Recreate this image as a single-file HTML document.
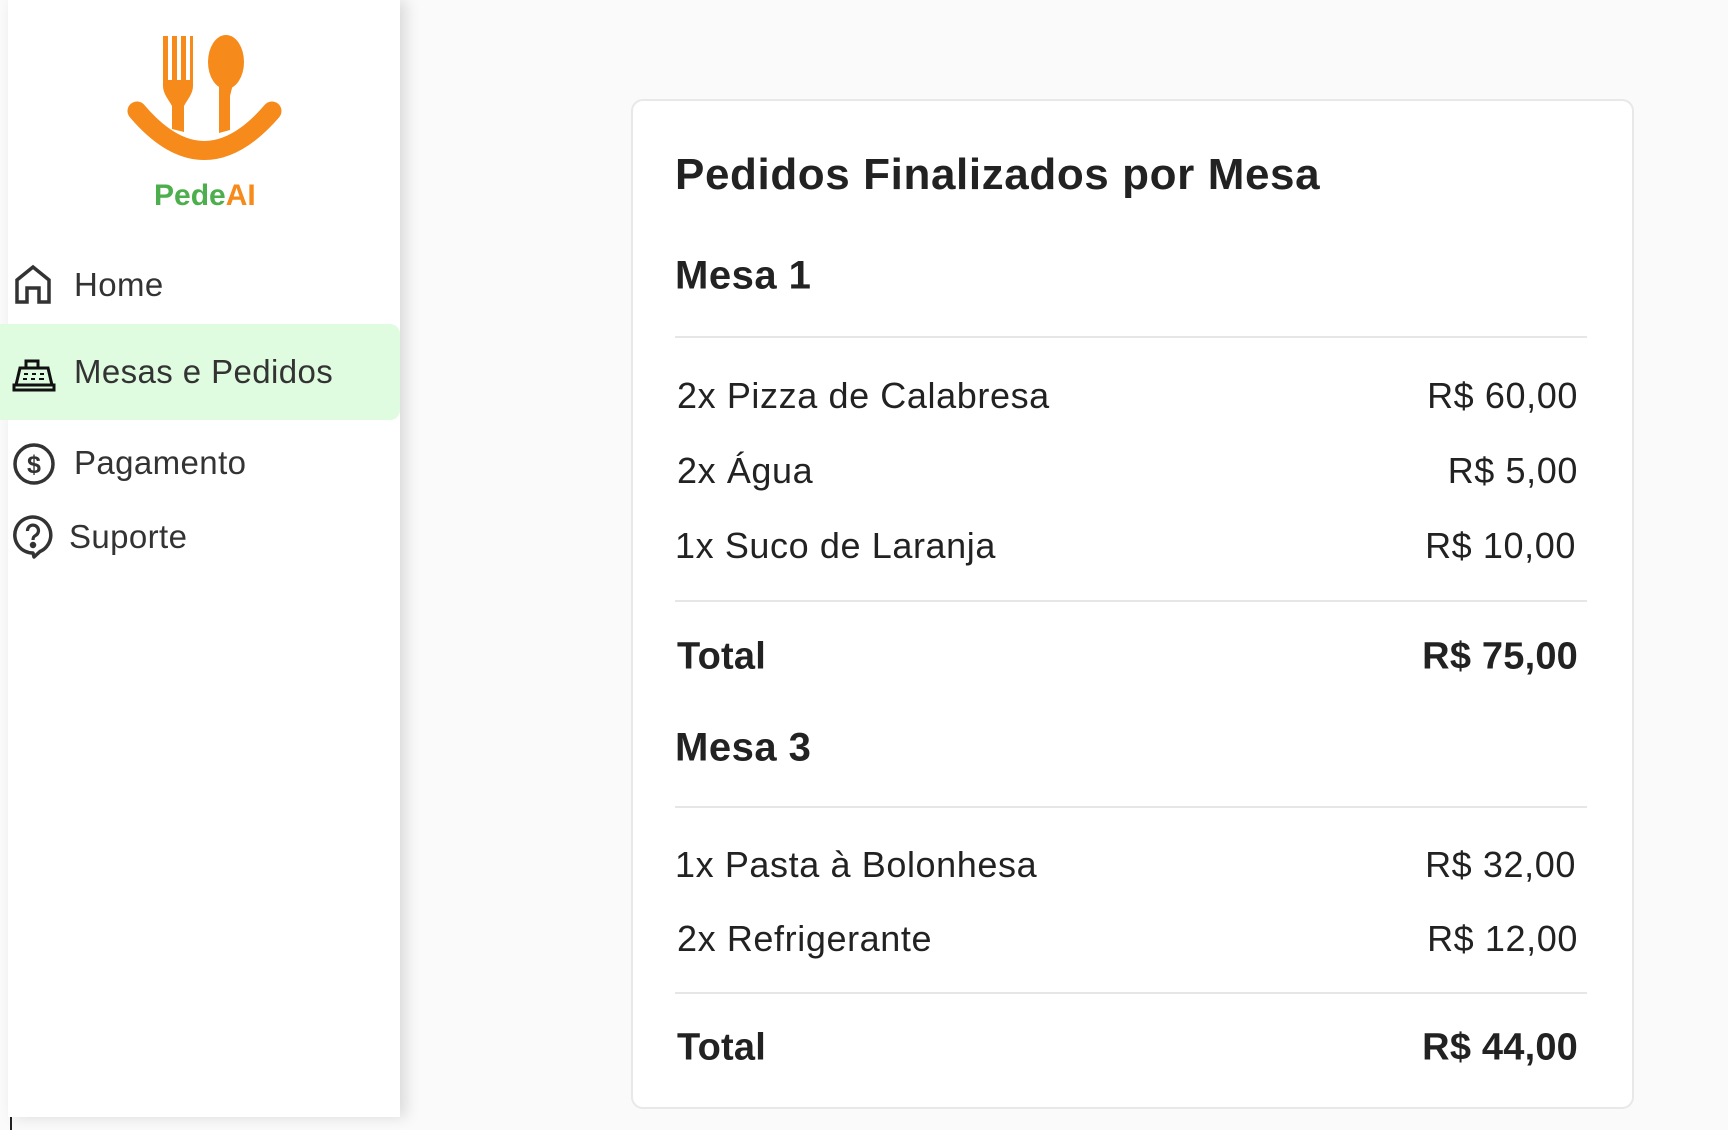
<!DOCTYPE html>
<html><head><meta charset="utf-8"><style>
*{margin:0;padding:0;box-sizing:border-box}
body{width:1728px;height:1130px;background:#fafafa;position:relative;overflow:hidden;font-family:"Liberation Sans",sans-serif;color:#222}
.side{position:absolute;left:8px;top:0;width:392px;height:1117px;background:#fff;box-shadow:6px 0 14px rgba(0,0,0,.13)}
.nav{position:absolute;left:0;font-size:33px;color:#333;display:flex;align-items:center;letter-spacing:0.4px}
.act{position:absolute;left:0;top:324px;width:400px;height:96px;background:#dffbe0;border-radius:0 10px 10px 0}
.card{position:absolute;left:631px;top:99px;width:1003px;height:1010px;background:#fff;border:2px solid #e8e8e8;border-radius:12px}
.t{position:absolute;left:675px;font-weight:bold;transform:translateY(-50%);white-space:nowrap}
.row{position:absolute;left:677px;width:901px;display:flex;justify-content:space-between;font-size:36px;letter-spacing:0.6px;transform:translateY(-50%);color:#222}
.row.b{font-weight:bold;font-size:38px;letter-spacing:0.2px;left:677px}
.hr{position:absolute;left:675px;width:912px;height:2px;background:#e6e6e6}
</style></head><body>
<div class="side"></div>
<svg style="position:absolute;left:0;top:0" width="400" height="220">
<g fill="#f68a1a">
<path d="M163 36h5v44h4V36h5v44h4V36h5v44h4V36h3v50c0,8 -6,14 -9,20v26l-12,-3v-23c-3,-6 -9,-12 -9,-20z"/>
<ellipse cx="226" cy="62" rx="18" ry="27"/>
<path d="M219 84h14l-3 12v34l-11,3z"/>
</g>
<path d="M137 111 Q204 190 272 111" fill="none" stroke="#f68a1a" stroke-width="19" stroke-linecap="round"/>
<text x="154" y="205" font-size="30" font-weight="bold" fill="#4cae4c" font-family="Liberation Sans,sans-serif">Pede<tspan fill="#f68a1a">AI</tspan></text>
</svg>
<div class="act"></div>
<svg style="position:absolute;left:14px;top:264px" width="40" height="40" viewBox="0 0 40 40" fill="none" stroke="#333" stroke-width="3.5"><path d="M3 38V16L19 3l16 13v22H25V24h-12v14z"/></svg>
<div class="nav" style="left:74px;top:265px;height:40px">Home</div>
<svg style="position:absolute;left:12px;top:356px" width="44" height="36" viewBox="0 0 44 36" fill="none" stroke="#111" stroke-width="3"><rect x="2" y="29" width="40" height="5"/><path d="M4 29L8 12h28l4 17"/><rect x="14" y="5" width="12" height="7"/><path d="M12 18h4M20 18h4M28 18h4M11 23h4M19 23h4M27 23h5" stroke-width="2"/></svg>
<div class="nav" style="left:74px;top:352px;height:40px">Mesas e Pedidos</div>
<svg style="position:absolute;left:12px;top:442px" width="44" height="44" viewBox="0 0 44 44" fill="none" stroke="#333" stroke-width="3.5"><circle cx="22" cy="22" r="19"/><text x="22" y="31" font-size="25" font-weight="bold" text-anchor="middle" fill="#333" stroke="none" font-family="Liberation Sans,sans-serif">$</text></svg>
<div class="nav" style="left:74px;top:443px;height:40px">Pagamento</div>
<svg style="position:absolute;left:13px;top:514px" width="40" height="46" viewBox="0 0 40 46" fill="none" stroke="#333" stroke-width="3.5"><path d="M20 39A18 18 0 1 1 27 37.5L21 43z" stroke-linejoin="round"/><path d="M14.5 17a5.5 5.5 0 1 1 8 4.5c-2 1 -2.5 2.5 -2.5 4.5" stroke-width="3.2"/><circle cx="20" cy="31" r="1.5" fill="#333"/></svg>
<div class="nav" style="left:69px;top:517px;height:40px">Suporte</div>
<div style="position:absolute;left:10px;top:1117px;width:2px;height:13px;background:#222"></div>

<div class="card"></div>
<div class="t" style="top:175px;font-size:44px;letter-spacing:0.6px">Pedidos Finalizados por Mesa</div>
<div class="t" style="top:276px;font-size:40px;letter-spacing:0.5px">Mesa 1</div>
<div class="hr" style="top:336px"></div>
<div class="row" style="top:396px"><span>2x Pizza de Calabresa</span><span>R$ 60,00</span></div>
<div class="row" style="top:471px"><span>2x Água</span><span>R$ 5,00</span></div>
<div class="row" style="top:546px;left:675px"><span>1x&nbsp;Suco de Laranja</span><span>R$ 10,00</span></div>
<div class="hr" style="top:600px"></div>
<div class="row b" style="top:657px"><span>Total</span><span>R$ 75,00</span></div>
<div class="t" style="top:748px;font-size:40px;letter-spacing:0.5px">Mesa 3</div>
<div class="hr" style="top:806px"></div>
<div class="row" style="top:865px;left:675px"><span>1x&nbsp;Pasta à Bolonhesa</span><span>R$ 32,00</span></div>
<div class="row" style="top:939px"><span>2x Refrigerante</span><span>R$ 12,00</span></div>
<div class="hr" style="top:992px"></div>
<div class="row b" style="top:1048px"><span>Total</span><span>R$ 44,00</span></div>
</body></html>
